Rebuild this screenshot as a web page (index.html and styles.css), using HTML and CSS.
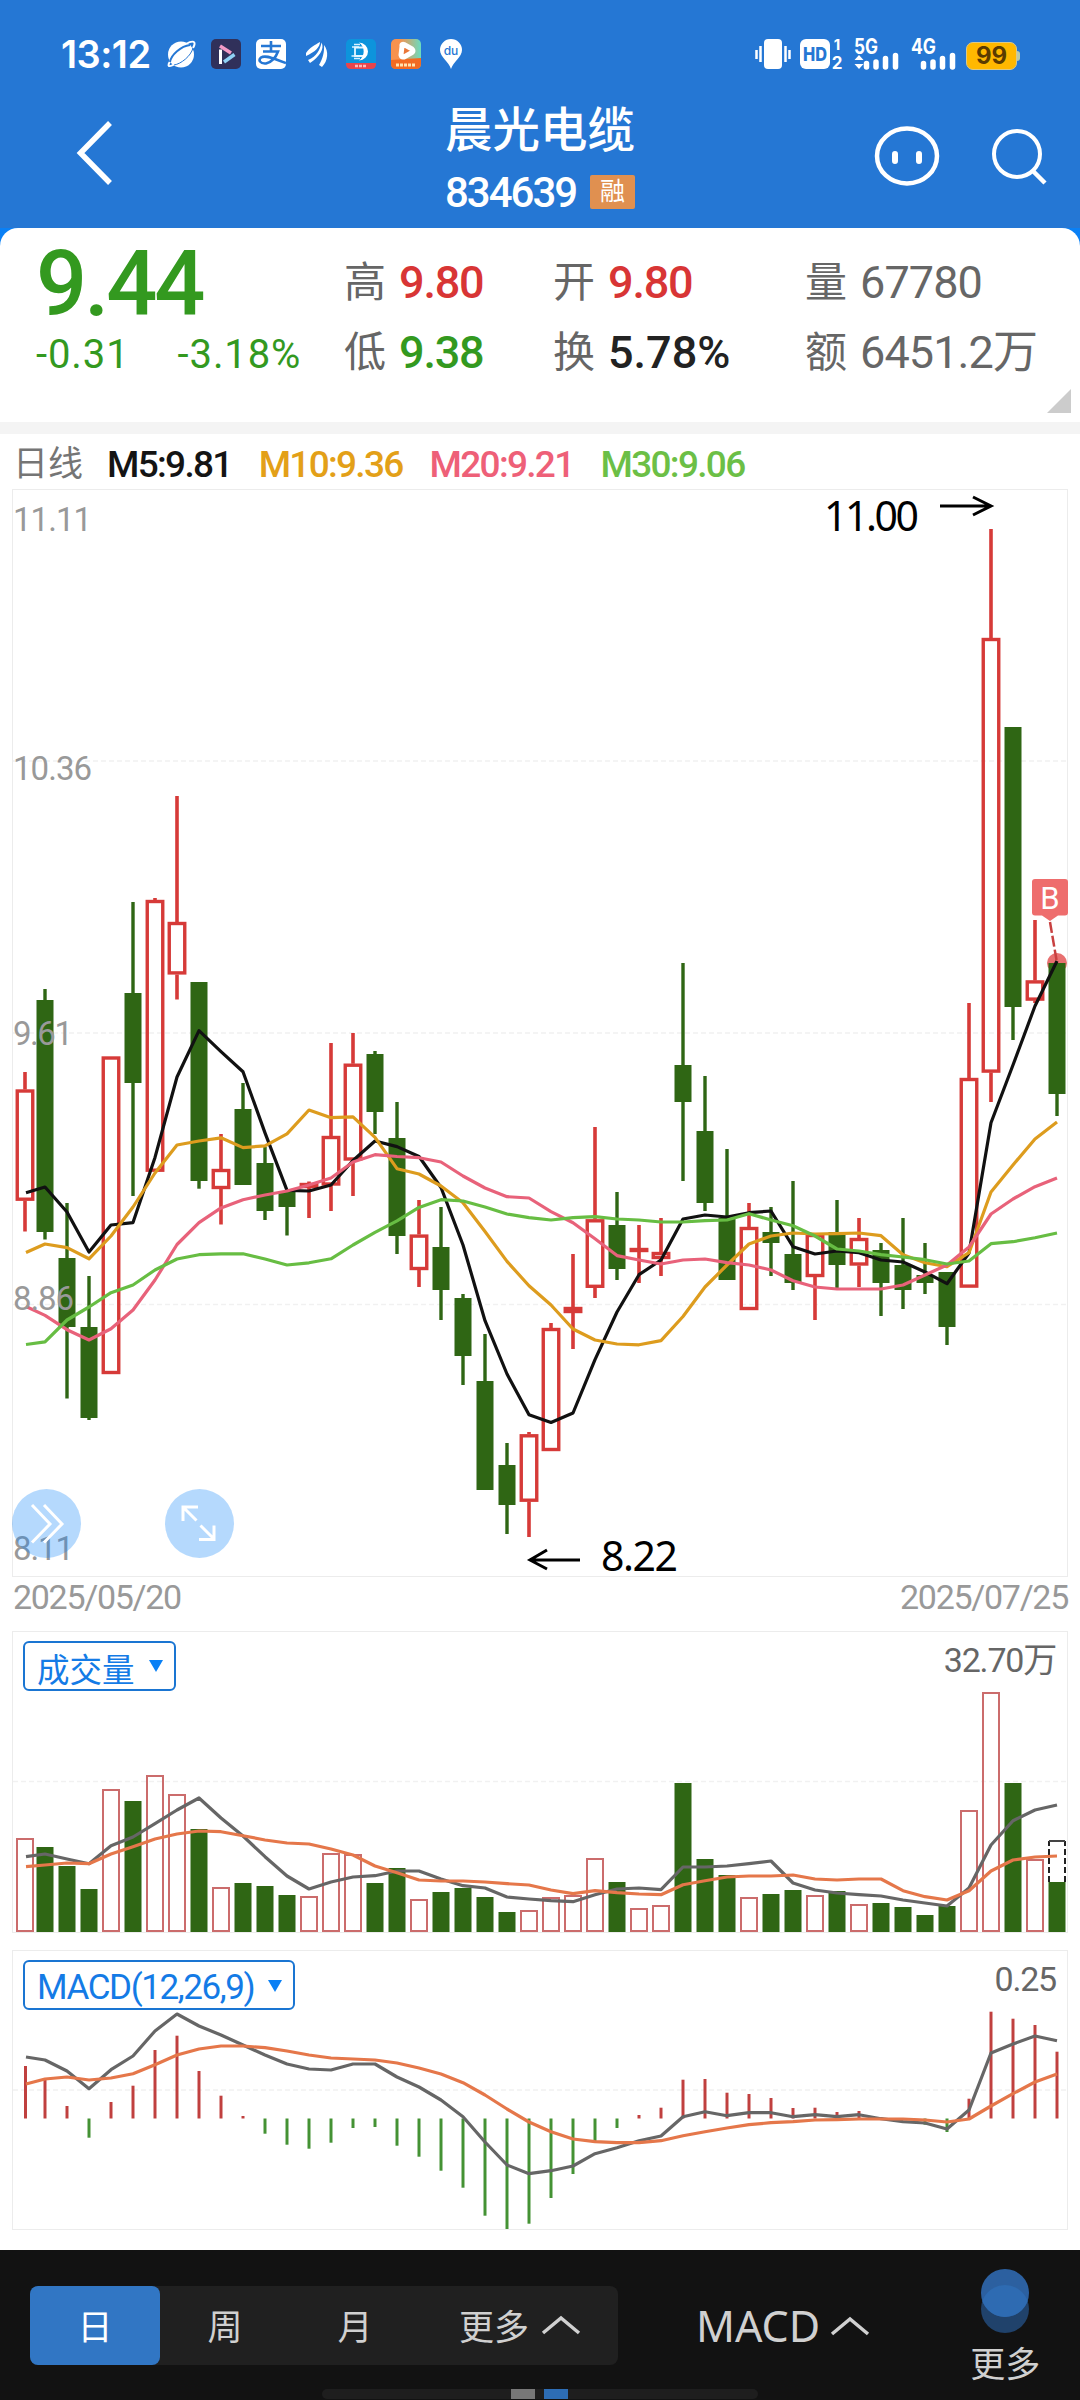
FILE: index.html
```html
<!DOCTYPE html>
<html lang="zh-CN">
<head>
    <meta charset="UTF-8">
    <meta name="viewport" content="width=device-width, initial-scale=1.0">
    <title>晨光电缆 834639</title>
    <link rel="stylesheet" href="styles.css">
</head>
<body>

<header class="header">
    <div class="status-bar">
        <span class="time">13:12</span>
        <div class="status-icons">
            <svg width="30" height="30" viewBox="0 0 30 30">
                <path d="M5 21C0 28 3 29 10 24M20 5C27 1 31 2 27 9" fill="none" stroke="#fff" stroke-width="2"/>
                <circle cx="15" cy="15.500" r="13" fill="#fff"/>
                <path d="M4 23C5 16 15 7 24 6" fill="none" stroke="#2577d4" stroke-width="2"/>
                <path d="M8 26C15 25 25 17 27 9" fill="none" stroke="#2577d4" stroke-width="1"/>
            </svg>
            <svg width="30" height="30" viewBox="0 0 30 30">
                <rect width="30" height="30" rx="5" fill="#30305a"/>
                <path d="M9.500 10.500V25" stroke="#fff" stroke-width="3"/>
                <path d="M9 7L20 14" stroke="#f39ac6" stroke-width="3.500"/>
                <path d="M13 23L23.500 15.500" stroke="#8fd2f5" stroke-width="3.500"/>
            </svg>
            <svg width="30" height="30" viewBox="0 0 30 30">
                <rect width="30" height="30" rx="5" fill="#fff"/>
                <path d="M5 7H25M15 2V12M7 12.500H22C20 18 16 23 10 24.500C4 25 2 21 5 18.500C10 15 20 21 30 24" fill="none" stroke="#2577d4" stroke-width="2.600"/>
            </svg>
            <svg width="30" height="30" viewBox="0 0 30 30">
                <path d="M5 14C9 8 14 6 19 3C19 8 14 13 5 17ZM7 21C16 17 19 11 20.500 3.500C24 10 18 18 9 24ZM18 26C22 19 23.500 13 23 6C28 12 27 22 21 28Z" fill="#fff"/>
            </svg>
            <svg width="30" height="30" viewBox="0 0 30 30">
                <rect width="30" height="30" rx="5" fill="#0d94dc"/>
                <path d="M0 24H30V25Q30 30 25 30H5Q0 30 0 25Z" fill="#e8444c"/>
                <path d="M13 3.500A9 9 0 1 1 13 21.500A11 11 0 0 0 13 3.500Z" fill="#fff"/>
                <path d="M8 5.500H14M6 8H13M5.500 17H13M8 19.500H14" stroke="#d8f0ff" stroke-width="1.300"/>
                <path d="M17 8.500H9V17H17" fill="none" stroke="#e6f6ff" stroke-width="1.800"/>
                <path d="M9 27H21" stroke="#ffb9b9" stroke-width="2.500" stroke-dasharray="3 1"/>
            </svg>
            <svg width="30" height="30" viewBox="0 0 30 30">
                <defs>
                    <linearGradient id="video" x1="0" y1="0" x2="1" y2="0">
                        <stop offset="0.300" stop-color="#f6924e"/>
                        <stop offset="1" stop-color="#69dcc0"/>
                    </linearGradient>
                </defs>
                <rect width="30" height="30" rx="5" fill="url(#video)"/>
                <path d="M0 21L30 19V25Q30 30 25 30H5Q0 30 0 25Z" fill="#f26a22"/>
                <path d="M11 7.500C10.500 5 12 5 13 5.500L21 10Q23 12 21 13.500L13 18Q10.500 18.500 10 16Z" fill="#e9773a" stroke="#fff" stroke-width="5" stroke-linejoin="round"/>
                <path d="M5 26H25" stroke="#ffe3b0" stroke-width="3" stroke-dasharray="3 1"/>
            </svg>
            <svg width="30" height="30" viewBox="0 0 30 30">
                <path d="M15 30C13 23 4 18 4 11A11 11 0 0 1 26 11C26 18 17 23 15 30Z" fill="#fff"/>
                <text x="15" y="15.500" text-anchor="middle" class="pin-text">du</text>
            </svg>
        </div>
        <div class="status-right">
            <svg width="36" height="30" viewBox="0 0 36 30">
                <rect x="9" y="0" width="18" height="30" rx="4" fill="#fff"/>
                <path d="M5.500 7V23M30.500 7V23M1.500 11V20M34.500 11V20" stroke="#fff" stroke-width="2.500"/>
            </svg>
            <svg class="hd" width="43" height="30" viewBox="0 0 43 30">
                <rect width="30" height="30" rx="6" fill="#fff"/>
                <text x="15" y="22" text-anchor="middle" class="hd-text" textLength="24" lengthAdjust="spacingAndGlyphs">HD</text>
                <text x="37" y="11" text-anchor="middle" class="net-text" font-size="15">1</text>
                <text x="37" y="29.500" text-anchor="middle" class="net-text" font-size="17">2</text>
            </svg>
            <svg class="signal" width="46" height="30" viewBox="0 0 46 30">
                <text x="0" y="15" class="net-text" font-size="21" textLength="24" lengthAdjust="spacingAndGlyphs">5G</text>
                <path d="M0.500 21L5 16L9.500 21ZM0.500 25L5 30L9.500 25Z" fill="#fff"/>
                <path d="M12.500 24.500V28M22 23V28M31.500 19.500V28M41.500 16.500V28" stroke="#fff" stroke-width="5.500" stroke-linecap="round"/>
            </svg>
            <svg class="signal" width="46" height="30" viewBox="0 0 46 30">
                <text x="0" y="15" class="net-text" font-size="21" textLength="25" lengthAdjust="spacingAndGlyphs">4G</text>
                <path d="M12.500 24.500V28M22 23V28M31.500 19.500V28M41.500 16.500V28" stroke="#fff" stroke-width="5.500" stroke-linecap="round"/>
            </svg>
            <span class="battery">99</span><i class="knob"></i>
        </div>
    </div>
    <div class="title-bar">
        <svg class="back" width="40" height="70" viewBox="0 0 40 70">
            <path d="M35 5L5.500 35L35 65" fill="none" stroke="#fff" stroke-width="5.500"/>
        </svg>
        <div class="stock">
            <h1>晨光电缆</h1>
            <div class="stock-code"><span>834639</span><b>融</b></div>
        </div>
        <div class="actions">
            <svg width="66" height="60" viewBox="0 0 66 60">
                <ellipse cx="33" cy="30" rx="30" ry="27.500" fill="none" stroke="#fff" stroke-width="4.500"/>
                <path d="M21 28V35M45 28V35" stroke="#fff" stroke-width="6" stroke-linecap="round"/>
            </svg>
            <svg class="search" width="56" height="60" viewBox="0 0 56 60">
                <circle cx="26" cy="28" r="23" fill="none" stroke="#fff" stroke-width="4"/>
                <path d="M42 45L54 57" stroke="#fff" stroke-width="4.500"/>
            </svg>
        </div>
    </div>
</header>

<div class="quote-wrap">
<section class="quote">
    <div class="price">
        <div class="last">9.44</div>
        <div class="change"><span>-0.31</span><span>-3.18%</span></div>
    </div>
    <dl class="fields">
        <div><dt>高</dt><dd class="up">9.80</dd></div>
        <div><dt>开</dt><dd class="up">9.80</dd></div>
        <div><dt>量</dt><dd class="plain">67780</dd></div>
        <div><dt>低</dt><dd class="down">9.38</dd></div>
        <div><dt>换</dt><dd class="rate">5.78%</dd></div>
        <div><dt>额</dt><dd class="plain">6451.2万</dd></div>
    </dl>
    <svg class="corner" width="24" height="24" viewBox="0 0 24 24"><path d="M24 0V24H0Z" fill="#ccc"/></svg>
</section>
</div>

<main class="charts">
    <div class="legend">
        <span class="period">日线</span>
        <span class="m5">M5:9.81</span>
        <span class="m10">M10:9.36</span>
        <span class="m20">M20:9.21</span>
        <span class="m30">M30:9.06</span>
    </div>

    <div class="panel">
        <svg id="kline" width="1056" height="1088" viewBox="12 489 1056 1088"></svg>
        <div class="tools">
            <button class="round">
                <svg width="69" height="69" viewBox="0 0 69 69"><path d="M20 16L38 35L20 53.500M32 16L50 35L32 53.500" fill="none" stroke="#fff" stroke-width="3"/></svg>
            </button>
            <button class="round">
                <svg width="69" height="69" viewBox="0 0 69 69"><path d="M18 32V18H33M18 18L31.500 31.500M35.500 36.500L49 50M49 36.500V50.500H34" fill="none" stroke="#fff" stroke-width="3"/></svg>
            </button>
        </div>
    </div>
    <div class="dates"><span>2025/05/20</span><span>2025/07/25</span></div>

    <div class="panel">
        <svg id="volume" width="1056" height="302" viewBox="12 1631 1056 302"></svg>
        <div class="panel-head">
            <button class="indicator">成交量 <i></i></button>
            <span>32.70万</span>
        </div>
    </div>

    <div class="panel macd-panel">
        <svg id="macd" width="1056" height="280" viewBox="12 1950 1056 280"></svg>
        <div class="panel-head">
            <button class="indicator latin">MACD(12,26,9) <i></i></button>
            <span>0.25</span>
        </div>
    </div>
</main>

<footer class="footer">
    <div class="nav">
        <div class="periods">
            <button class="active">日</button>
            <button>周</button>
            <button>月</button>
            <button class="wide">更多 <svg width="40" height="20" viewBox="0 0 40 20"><path d="M2 18L20 3L38 18" fill="none" stroke="#d0d0d0" stroke-width="3.500"/></svg></button>
        </div>
        <button class="sub">MACD <svg width="40" height="20" viewBox="0 0 40 20"><path d="M2 18L20 3L38 18" fill="none" stroke="#d0d0d0" stroke-width="3.500"/></svg></button>
        <button class="more">
            <svg width="50" height="66" viewBox="0 0 50 66">
                <circle cx="25" cy="41" r="24" fill="#20426b"/>
                <circle cx="25" cy="25" r="24" fill="#2c60a0"/>
                <path d="M2.400 33A24 24 0 0 1 47.600 33A24 24 0 0 1 2.400 33Z" fill="#2e6bb2"/>
            </svg>
            更多
        </button>
    </div>
    <div class="pager"><i></i><i class="on"></i></div>
</footer>

<script src="script.js"></script>
</body>
</html>
```
FILE: styles.css
```css
* {
    box-sizing: border-box;
}

body {
    margin: 0;
    width: 1080px;
    background-color: #fff;
    font-family: Roboto, "Noto Sans CJK SC", sans-serif;
    color: #222;
}

button {
    border: none;
    padding: 0;
    background: none;
    font-family: inherit;
    color: inherit;
}

svg {
    display: block;
    flex-shrink: 0;
}

/* header */
.header {
    height: 228px;
    background-color: #2577d4;
    color: #fff;
}

.status-bar {
    display: flex;
    align-items: center;
    height: 100px;
    padding: 8px 60px 0 61px;
}

.time {
    width: 105px;
    font-family: Inter, sans-serif;
    font-size: 38px;
    font-weight: 600;
    letter-spacing: -0.5px;
}

.status-icons {
    display: flex;
    gap: 15px;
}

.pin-text {
    font: 500 12px Inter, sans-serif;
    fill: #2577d4;
}

.status-right {
    display: flex;
    align-items: center;
    margin-left: auto;
}

.hd {
    margin-left: 9px;
    overflow: visible;
}

.hd-text {
    font-family: Inter, sans-serif;
    font-size: 19px;
    font-weight: 800;
    fill: #2577d4;
}

.net-text {
    font-family: Inter, sans-serif;
    font-weight: 700;
    fill: #fff;
}

.signal {
    margin-left: 11px;
    overflow: visible;
}

.battery {
    width: 51px;
    height: 28px;
    margin: 3px 0 0 9px;
    border: 1.5px solid #d9c98a;
    border-radius: 7px;
    background-color: #ffb800;
    color: #5a3b00;
    font: 700 24px/25px Inter, sans-serif;
    text-align: center;
}

.knob {
    width: 3px;
    height: 10px;
    margin-top: 3px;
    border-radius: 0 3px 3px 0;
    background-color: #b9c9a8;
}

.title-bar {
    display: grid;
    grid-template-columns: 1fr auto 1fr;
    height: 128px;
}

.back {
    margin: 18px 0 0 75px;
}

.stock h1 {
    margin: 3px 0 0;
    font-size: 47.5px;
    line-height: 56px;
    font-weight: 500;
    text-align: center;
}

.stock-code {
    display: flex;
    align-items: center;
    justify-content: space-between;
    height: 36px;
    margin-top: 15px;
    font-size: 42px;
    font-weight: 500;
    letter-spacing: -2px;
}

.stock-code b {
    width: 45px;
    height: 34px;
    border-radius: 2px;
    background-color: #e09050;
    font-size: 25px;
    line-height: 33px;
    font-weight: 400;
    letter-spacing: 0;
    text-align: center;
}

.actions {
    display: flex;
    justify-content: flex-end;
    gap: 51px;
    padding: 26px 33px 0 0;
}

/* quote */
.quote-wrap {
    background-color: #0a80f5;
}

.quote {
    position: relative;
    display: flex;
    height: 206px;
    padding: 12px 0 0 36px;
    border-radius: 18px 18px 0 0;
    border-bottom: 12px solid #f4f4f4;
    background-color: #fff;
}

.price {
    width: 308px;
    color: #33991f;
}

.last {
    font-size: 90px;
    line-height: 90px;
    font-weight: 500;
    letter-spacing: -3px;
}

.change {
    display: flex;
    gap: 48px;
    margin-top: 3px;
    font-size: 40px;
    line-height: 44px;
    letter-spacing: 0.9px;
}

.fields {
    display: grid;
    grid-template-columns: 209px 252px 250px;
    grid-auto-rows: 70px;
    margin: 9px 0 0;
}

.fields div {
    display: flex;
    line-height: 68px;
}

.fields dt {
    width: 55px;
    font-size: 42px;
    color: #666;
}

.fields dd {
    margin: 0;
    font-size: 45px;
    font-weight: 500;
    letter-spacing: -1.2px;
    white-space: nowrap;
}

.fields .up {
    color: #d83535;
}

.fields .down {
    color: #33991f;
}

.fields .rate {
    letter-spacing: 0;
}

.fields .plain {
    color: #666;
    font-weight: 400;
    letter-spacing: -0.9px;
}

.corner {
    position: absolute;
    right: 9px;
    bottom: 9px;
}

/* charts */
.charts {
    height: 1816px;
    padding: 0 12px;
}

.legend {
    display: flex;
    align-items: center;
    gap: 27px;
    height: 55px;
    padding: 6px 0 0 1px;
    font-size: 37px;
    line-height: 44px;
    font-weight: 500;
    letter-spacing: -1.7px;
}

.period {
    margin-right: -3px;
    color: #757575;
    font-size: 35px;
    font-weight: 400;
    letter-spacing: 0;
}

.m5 { color: #141414; }
.m10 { color: #e3a018; }
.m20 { color: #ee6078; }
.m30 { color: #6cbf46; }

.panel {
    position: relative;
}

.tools {
    position: absolute;
    left: 0;
    bottom: 19px;
    display: flex;
    gap: 84px;
}

.round {
    width: 69px;
    height: 69px;
    border-radius: 50%;
    background-color: rgba(10, 128, 250, 0.3);
}

.dates {
    display: flex;
    justify-content: space-between;
    height: 54px;
    padding: 0 0 0 1px;
    font-size: 34px;
    line-height: 41px;
    letter-spacing: -1.3px;
    color: #999;
}

.panel-head {
    position: absolute;
    left: 11px;
    right: 12px;
    top: 10px;
    display: flex;
    justify-content: space-between;
    font-size: 34px;
    line-height: 38px;
    letter-spacing: -1.2px;
    color: #666;
}

.indicator {
    display: flex;
    align-items: center;
    gap: 14px;
    height: 50px;
    padding: 2px 11px 0 12px;
    border: 2px solid #1a75d2;
    border-radius: 6px;
    background-color: #fff;
    color: #147be6;
    font-size: 32.5px;
}

.latin {
    padding-top: 4px;
    font-size: 35px;
    letter-spacing: -1.4px;
}

.indicator i {
    margin-top: -2px;
    border: 7px solid transparent;
    border-top: 12px solid #0a80f5;
    border-bottom: 0;
}

.macd-panel {
    margin-top: 17px;
}

.axis {
    font-size: 33px;
    fill: #999;
}

.note {
    font-family: "Noto Sans", sans-serif;
    font-size: 41px;
    fill: #000;
}

.line {
    fill: none;
    stroke-width: 3.2;
    stroke-linejoin: round;
}

/* footer */
.footer {
    height: 150px;
    background-color: #121212;
    color: #d0d0d0;
}

.nav {
    display: flex;
    height: 139px;
    padding-left: 30px;
}

.periods {
    display: flex;
    width: 588px;
    height: 79px;
    margin-top: 36px;
    border-radius: 8px;
    background-color: #202020;
}

.periods button {
    width: 130px;
    padding-bottom: 2px;
    font-size: 35px;
}

.periods .active {
    border-radius: 8px;
    background-color: #3176c4;
    color: #fff;
}

.periods .wide {
    display: flex;
    align-items: center;
    gap: 12px;
    width: 198px;
    padding-left: 39px;
}

.sub {
    display: flex;
    align-items: center;
    gap: 10px;
    height: 79px;
    margin: 36px 0 0 78px;
    font-family: "Noto Sans", sans-serif;
    font-size: 43px;
}

.more {
    display: flex;
    flex-direction: column;
    align-items: center;
    margin: 18px 0 0 100px;
    font-size: 35px;
    line-height: 64px;
}

.pager {
    display: flex;
    gap: 9px;
    width: 436px;
    height: 10px;
    margin-left: 322px;
    padding-left: 189px;
    border-radius: 5px;
    background-color: #1e1e1e;
}

.pager i {
    width: 24px;
    height: 10px;
    background-color: #777;
}

.pager .on {
    background-color: #2d6db5;
}
```
FILE: script.js
```javascript
// [up, high, open/close top, open/close bottom, low]
const candles = [
    [1, 1072, 1089.5, 1200.7, 1231.5], [0, 989, 1000, 1232, 1239.5], [0, 1203, 1258, 1327, 1398.5], [0, 1276, 1327, 1418, 1420],
    [1, 1056.5, 1056.5, 1374, 1374], [0, 902, 993, 1083, 1196], [1, 898, 900, 1171.7, 1171.7], [1, 796, 922, 974.4, 999.4],
    [0, 982, 982, 1181, 1188.7], [1, 1134, 1169, 1189, 1224.4], [0, 1083, 1109, 1185, 1185], [0, 1147, 1163, 1211, 1220],
    [0, 1190, 1191, 1207, 1235.5], [1, 1181.5, 1183, 1188, 1218], [1, 1043, 1136, 1185.5, 1211], [1, 1033, 1063.7, 1160.5, 1196],
    [0, 1051, 1054, 1112, 1134], [0, 1102, 1138, 1236, 1254], [1, 1200, 1234.6, 1270, 1287], [0, 1207, 1247, 1290, 1320],
    [0, 1294, 1298, 1356, 1385], [0, 1334, 1381, 1490, 1490], [0, 1443, 1465, 1505, 1534], [1, 1432, 1434.3, 1501.7, 1537],
    [1, 1323, 1328, 1451, 1451], [1, 1254, 1307, 1313, 1349], [1, 1127, 1219.3, 1287.8, 1298], [0, 1192, 1225, 1269, 1280],
    [1, 1225, 1248, 1252, 1283], [1, 1218, 1252, 1259, 1276], [0, 963, 1065, 1102, 1181], [0, 1076, 1131, 1203, 1211],
    [0, 1149, 1218, 1280, 1280], [1, 1203, 1227, 1310, 1310], [0, 1207, 1232, 1243, 1276], [0, 1181, 1254, 1283, 1290],
    [1, 1233, 1234, 1277, 1320], [0, 1200, 1232, 1265, 1289], [1, 1218, 1238, 1265.5, 1287], [0, 1243, 1250, 1283, 1316],
    [0, 1218, 1265, 1290, 1309], [0, 1243, 1275, 1283, 1294], [0, 1272, 1272, 1327, 1345], [1, 1003, 1078, 1287.6, 1287.6],
    [1, 529, 638, 1072.6, 1102], [0, 727, 727, 1007, 1040], [1, 920, 980.4, 1000.6, 1003], [0, 963, 963, 1094, 1116]
];

const ma5 = [1192.7, 1187, 1212, 1252, 1225, 1222.6, 1157.4, 1077, 1030.6, 1051.6, 1071.7, 1132.9, 1190.4, 1191, 1185, 1160.5, 1141, 1146.6, 1156.5, 1187.5, 1245, 1320.7, 1374, 1414.8, 1422.5, 1413, 1359.7, 1312, 1274.7, 1260, 1219, 1215, 1217, 1212.7, 1211, 1246.7, 1254, 1251, 1252.7, 1260, 1262, 1272, 1283.7, 1253, 1122.7, 1065, 1006, 961];
const ma10 = [1252.5, 1244, 1247.6, 1258.8, 1236, 1207, 1173, 1145, 1141, 1137.8, 1147.6, 1145.8, 1133.8, 1110, 1117.7, 1116.8, 1137.3, 1168.7, 1174, 1186, 1202.8, 1231.5, 1261.4, 1285.8, 1305, 1329, 1340, 1344, 1344.8, 1340.6, 1316.5, 1287, 1265, 1244, 1236, 1233, 1234, 1233.7, 1233, 1235.7, 1254.7, 1262.7, 1266.7, 1252.7, 1192, 1165, 1139, 1122];
const ma20 = [1306.5, 1315.4, 1329.7, 1340, 1328.8, 1310, 1280, 1244.5, 1222.6, 1207.9, 1199.8, 1195, 1191, 1185, 1178, 1162, 1154.7, 1156.5, 1157.7, 1162, 1176, 1188, 1196.7, 1198, 1211.6, 1222.7, 1238.8, 1255.6, 1260, 1264, 1260, 1259, 1262.7, 1265, 1270, 1280.7, 1287, 1289, 1289, 1289, 1285, 1275, 1265, 1247, 1214, 1199, 1186.7, 1178];
const ma30 = [1344.5, 1341.8, 1320, 1307, 1292.7, 1285, 1270, 1259, 1254.7, 1253.8, 1253.8, 1259, 1265, 1262.8, 1258.8, 1245, 1232.4, 1220.8, 1207.4, 1199.7, 1201, 1207, 1214, 1217.7, 1220, 1217.7, 1216.6, 1219, 1220, 1222, 1222, 1220.7, 1220, 1213.7, 1220, 1225.7, 1236, 1249, 1251, 1254.7, 1257, 1259.7, 1264, 1261, 1243.7, 1241.7, 1237.7, 1233];

const volumes = [1838, 1847, 1866, 1889, 1789, 1801, 1775, 1794, 1829, 1887, 1883, 1886, 1895, 1896, 1853, 1854, 1883, 1868, 1899, 1892, 1888, 1897, 1912, 1910, 1897, 1895, 1858, 1882, 1908, 1905, 1783, 1859, 1875, 1897, 1894, 1890, 1895, 1891, 1904, 1903, 1907, 1915, 1906, 1810, 1692, 1783, 1859, 1882];
const vol5 = [1856.7, 1854, 1859, 1863.7, 1845.7, 1837, 1823.7, 1810, 1798, 1818, 1836, 1856.7, 1876, 1889, 1882, 1877, 1875.7, 1871, 1871, 1879, 1885.7, 1888, 1897, 1899, 1900.7, 1901.7, 1894.7, 1889, 1888, 1889.7, 1867, 1867, 1866, 1863.7, 1861, 1883, 1890, 1893, 1894.7, 1896, 1900, 1903, 1906, 1888, 1845, 1820.7, 1810, 1805];
const vol10 = [1866.7, 1865, 1863, 1863.7, 1854, 1846.7, 1839, 1834, 1831, 1831.7, 1835.7, 1840, 1843, 1844, 1849, 1855, 1866, 1872.7, 1880, 1881, 1881, 1882, 1883.7, 1885, 1890, 1893.7, 1890.7, 1892.7, 1894, 1894.7, 1884.7, 1880.7, 1877, 1876, 1876, 1875, 1879, 1880, 1879, 1879, 1890.7, 1896.7, 1900, 1890.7, 1871, 1860, 1857, 1856];

const macdBars = [2066, 2079, 2106, 2137.7, 2102, 2085.7, 2050, 2035.7, 2071, 2095.7, 2116, 2133.7, 2144.7, 2148.7, 2142.7, 2128, 2127, 2145.7, 2156.7, 2170.7, 2187.7, 2215.7, 2229, 2223.7, 2198, 2174, 2141, 2128, 2115, 2107.7, 2079.7, 2079, 2092.7, 2094, 2098, 2108, 2107.7, 2112, 2111, 2117.7, 2119.7, 2124.7, 2132, 2098.7, 2011.7, 2018.7, 2025, 2051.7];
const dif = [2057, 2060, 2071, 2088.7, 2069.7, 2056, 2031, 2014, 2026, 2035, 2045, 2055, 2064, 2069, 2070, 2064, 2064, 2077, 2087, 2100, 2116.7, 2142, 2165, 2173.7, 2170.7, 2166, 2153.7, 2147.7, 2140.7, 2136, 2116.7, 2111.7, 2115.7, 2112.7, 2112.7, 2116.7, 2114.7, 2116.7, 2114.7, 2118.7, 2121.7, 2123, 2129, 2110, 2053, 2044, 2036, 2040.7];
const dea = [2084, 2079, 2077, 2080, 2078, 2073.7, 2064.7, 2055, 2049, 2046, 2046, 2047.7, 2051, 2055, 2058, 2059, 2060, 2063, 2068, 2074, 2082.7, 2095, 2109, 2122, 2131.7, 2139, 2141.7, 2142.7, 2142.7, 2140.7, 2135.7, 2131.7, 2128, 2124.7, 2122.7, 2121.7, 2120, 2119.7, 2119, 2119, 2119, 2120, 2122, 2119, 2106, 2093.7, 2082, 2074];

const RED = "#d63a38";
const GREEN = "#2f6614";

function xAt(i) {
    return i === 0 ? 25 : 23 + 22 * i;
}

function line(values, color) {
    const points = values.map((y, i) => `${i === 0 ? 26 : xAt(i)},${y}`).join(" ");
    return `<polyline class="line" points="${points}" stroke="${color}"/>`;
}

function frame(y, height) {
    return `<rect x="12.5" y="${y + 0.5}" width="1055" height="${height - 1}" fill="none" stroke="#ececec"/>`;
}

function grid(y) {
    return `<path d="M13 ${y}H1067" stroke="#f1f1f1" stroke-width="1.5" stroke-dasharray="5 3"/>`;
}

function label(x, y, text, width) {
    return `<text class="axis" x="${x}" y="${y}" textLength="${width}">${text}</text>`;
}

// candlestick chart
let k = frame(489, 1088) + grid(761) + grid(1033) + grid(1304.5);
k += `<circle cx="1057" cy="963" r="10" fill="#e87070"/>`;
candles.forEach(([up, high, top, bottom, low], i) => {
    const x = xAt(i);
    if (up) {
        k += `<path d="M${x} ${high}V${top}M${x} ${bottom}V${low}" stroke="${RED}" stroke-width="3.6"/>`;
        k += `<rect x="${x - 7.75}" y="${top + 1.5}" width="15.5" height="${Math.max(bottom - top - 3, 1)}" fill="none" stroke="${RED}" stroke-width="3.4"/>`;
    } else {
        k += `<path d="M${x} ${high}V${low}" stroke="${GREEN}" stroke-width="3.4"/>`;
        k += `<rect x="${x - 8.5}" y="${top}" width="17" height="${bottom - top}" fill="${GREEN}"/>`;
    }
});
k += line(ma5, "#111") + line(ma10, "#dd9c1e") + line(ma20, "#e8627a") + line(ma30, "#67bd43");
k += label(13, 531, "11.11", 79) + label(13, 780, "10.36", 79) + label(13, 1045, "9.61", 60) + label(13, 1310, "8.86", 61) + label(13, 1560, "8.11", 61);
k += `<text class="note" x="824" y="531" textLength="95">11.00</text>`;
k += `<path d="M940 506H990M973 497L991 506L973 515" fill="none" stroke="#000" stroke-width="3"/>`;
k += `<text class="note" x="601" y="1570.5" textLength="77">8.22</text>`;
k += `<path d="M580 1560H531M547 1550L530 1560L547 1569" fill="none" stroke="#000" stroke-width="3"/>`;
// buy marker
k += `<path d="M1035 879H1065Q1068 879 1068 882V912.500Q1068 915.500 1065 915.500H1058L1050 921L1042 915.500H1035Q1032 915.500 1032 912.500V882Q1032 879 1035 879Z" fill="#ee6d6d"/>`;
k += `<text x="1050" y="908.500" text-anchor="middle" font-size="31" fill="#fff">B</text>`;
k += `<path d="M1050 922L1056.500 960" stroke="#c84040" stroke-width="2.500" stroke-dasharray="11 3"/>`;
document.getElementById("kline").innerHTML = k;

// volume
let v = frame(1631, 302) + grid(1781.5);
volumes.forEach((top, i) => {
    const x = xAt(i);
    if (candles[i][0]) {
        v += `<rect x="${x - 8}" y="${top + 1}" width="16" height="${1931 - top - 1}" fill="none" stroke="#cb6c6c" stroke-width="2"/>`;
    } else {
        v += `<rect x="${x - 8.5}" y="${top}" width="17" height="${1932 - top}" fill="${GREEN}"/>`;
    }
});
v += `<path d="M1049 1882V1841M1065 1882V1841" fill="none" stroke="#222" stroke-width="2" stroke-dasharray="6 3"/>`;
v += `<path d="M1049 1841H1065" stroke="#444" stroke-width="2"/>`;
v += line(vol5, "#666") + line(vol10, "#e5774a");
document.getElementById("volume").innerHTML = v;

// macd
let m = frame(1950, 280) + grid(2090);
macdBars.forEach((y, i) => {
    const color = y < 2118.5 ? "#c0403f" : "#449234";
    m += `<path d="M${i === 0 ? 25.5 : xAt(i)} 2118.5V${y}" stroke="${color}" stroke-width="3"/>`;
});
m += line(dif, "#666") + line(dea, "#e5774a");
document.getElementById("macd").innerHTML = m;
```
